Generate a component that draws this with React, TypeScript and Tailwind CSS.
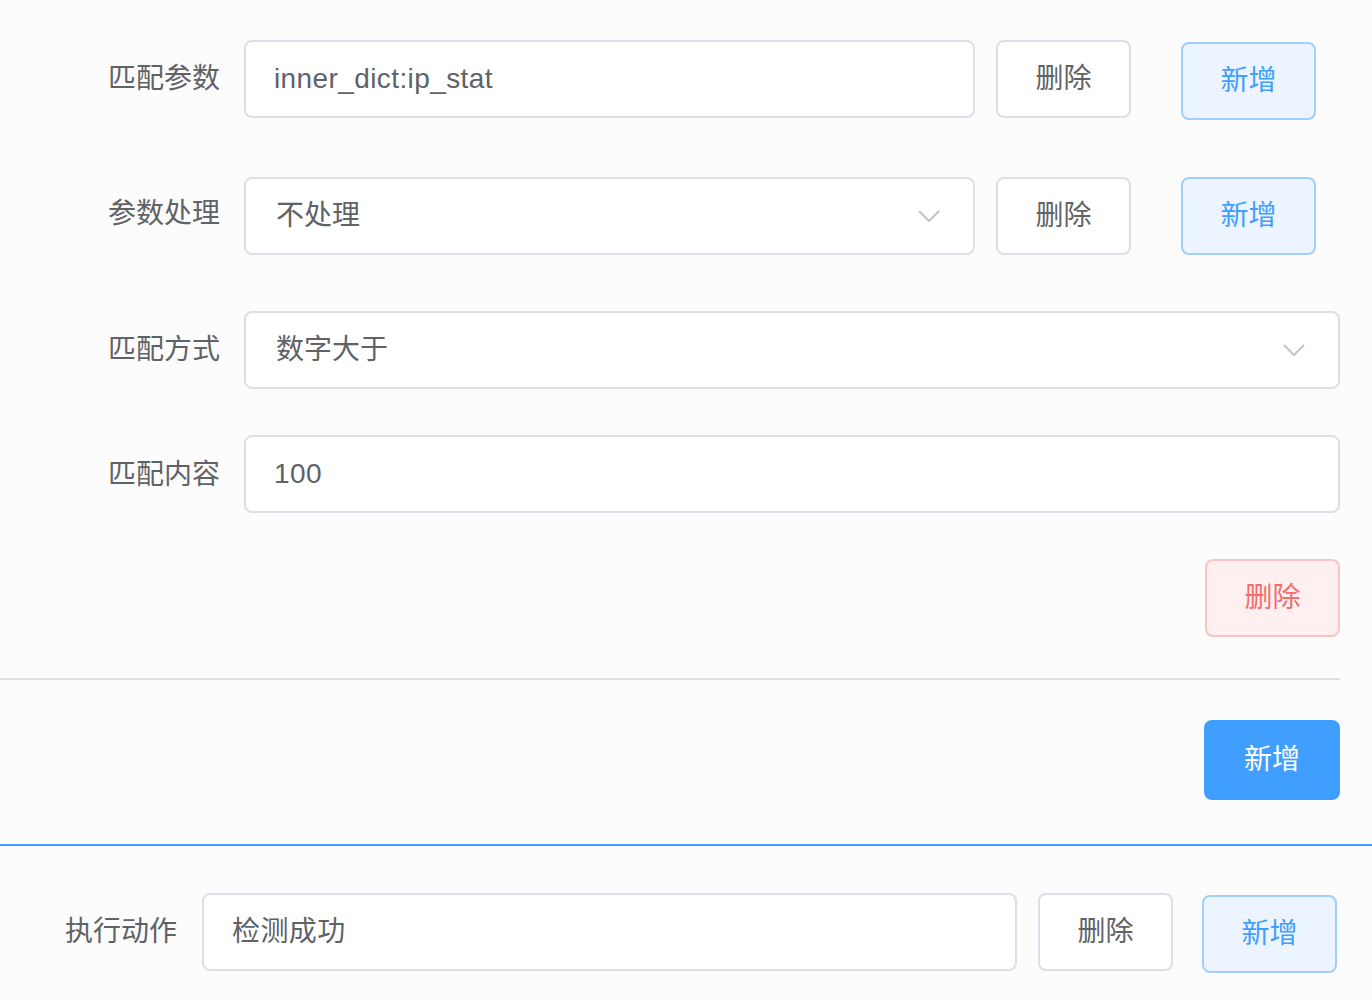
import React from 'react';

const font = { fontFamily: '"Liberation Sans", "Noto Sans CJK SC", sans-serif' };

const Chevron: React.FC = () => (
    <svg width="22" height="12" viewBox="0 0 22 12" fill="none">
        <path d="M1 1 L11 11 L21 1" stroke="#c0c4cc" strokeWidth="2" />
    </svg>
);

const Label: React.FC<{ text: string; className?: string }> = ({ text, className }) => (
    <div className={`shrink-0 text-right text-[28px] text-[#606266] ${className || ''}`}>{text}</div>
);

const TextBox: React.FC<{ value: string; className?: string }> = ({ value, className }) => (
    <div className={`h-[78px] flex items-center px-[28px] bg-white border-2 border-[#dcdfe6] rounded-[8px] text-[28px] text-[#606266] tracking-[0.4px] ${className || ''}`}>
        {value}
    </div>
);

const SelectBox: React.FC<{ value: string; className?: string }> = ({ value, className }) => (
    <div className={`h-[78px] flex items-center justify-between pl-[30px] pr-[33px] bg-white border-2 border-[#dcdfe6] rounded-[8px] text-[28px] text-[#606266] ${className || ''}`}>
        <span>{value}</span>
        <Chevron />
    </div>
);

const DeleteBtn: React.FC<{ className?: string }> = ({ className }) => (
    <button className={`w-[135px] h-[78px] shrink-0 bg-white border-2 border-[#dcdfe6] rounded-[8px] text-[28px] text-[#606266] ${className || ''}`}>
        删除
    </button>
);

const AddPlainBtn: React.FC<{ className?: string }> = ({ className }) => (
    <button className={`w-[135px] h-[78px] shrink-0 bg-[#ecf5ff] border-2 border-[#a0cfff] rounded-[8px] text-[28px] text-[#409eff] ${className || ''}`}>
        新增
    </button>
);

const App: React.FC = () => {
    return (
        <div className="w-[1372px] h-[1000px] overflow-hidden bg-[#fcfcfc]" style={font}>
            <div className="w-[1340px] pt-[40px]">
                {/* 匹配参数 */}
                <div className="flex items-start h-[78px]">
                    <Label text="匹配参数" className="w-[220px] leading-[78px]" />
                    <TextBox value="inner_dict:ip_stat" className="ml-[24px] w-[731px]" />
                    <DeleteBtn className="ml-[21px]" />
                    <AddPlainBtn className="ml-[50px] mt-[2px]" />
                </div>

                {/* 参数处理 */}
                <div className="flex items-start h-[78px] mt-[59px]">
                    <Label text="参数处理" className="w-[220px] leading-[74px]" />
                    <SelectBox value="不处理" className="ml-[24px] w-[731px]" />
                    <DeleteBtn className="ml-[21px]" />
                    <AddPlainBtn className="ml-[50px]" />
                </div>

                {/* 匹配方式 */}
                <div className="flex items-start h-[78px] mt-[56px]">
                    <Label text="匹配方式" className="w-[220px] leading-[78px]" />
                    <SelectBox value="数字大于" className="ml-[24px] flex-1" />
                </div>

                {/* 匹配内容 */}
                <div className="flex items-start h-[78px] mt-[46px]">
                    <Label text="匹配内容" className="w-[220px] leading-[80px]" />
                    <TextBox value="100" className="ml-[24px] flex-1" />
                </div>

                <div className="flex justify-end mt-[46px]">
                    <button className="w-[135px] h-[78px] bg-[#fef0f0] border-2 border-[#fbc4c4] rounded-[8px] text-[28px] text-[#f56c6c]">
                        删除
                    </button>
                </div>

                <div className="mt-[41px] h-[2px] bg-[#dfdfe4]" />

                <div className="flex justify-end mt-[40px]">
                    <button className="w-[136px] h-[80px] bg-[#409eff] rounded-[8px] text-[28px] text-white">
                        新增
                    </button>
                </div>
            </div>

            <div className="mt-[44px] h-[2px] bg-[#409eff]" />

            {/* 执行动作 */}
            <div className="w-[1340px] flex items-start h-[78px] mt-[47px]">
                <Label text="执行动作" className="w-[177px] leading-[78px]" />
                <TextBox value="检测成功" className="ml-[25px] w-[815px]" />
                <DeleteBtn className="ml-[21px]" />
                <AddPlainBtn className="ml-[29px] mt-[2px]" />
            </div>
        </div>
    );
};

export default App;
